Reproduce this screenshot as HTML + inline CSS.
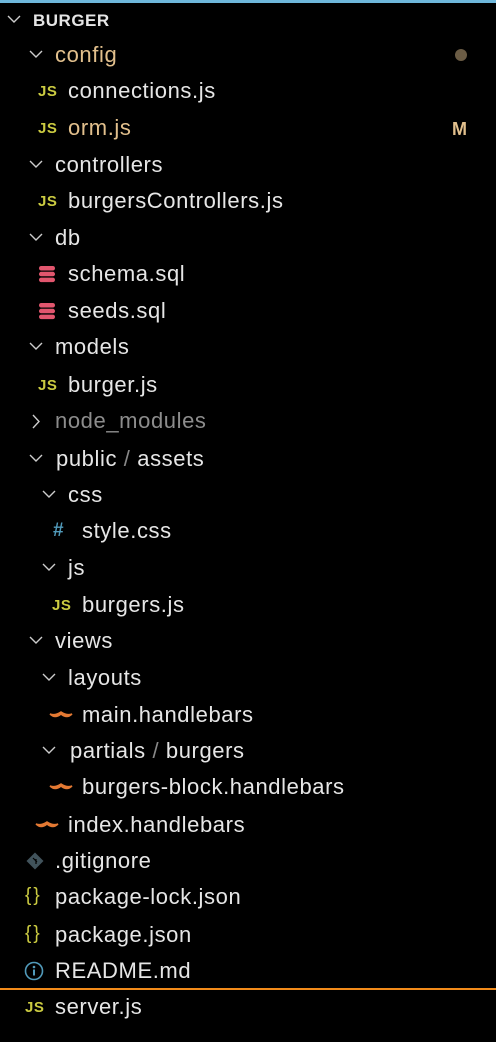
<!DOCTYPE html>
<html><head><meta charset="utf-8"><style>
html,body{margin:0;padding:0;background:#000;width:496px;height:1042px;overflow:hidden;position:relative;font-family:"Liberation Sans",sans-serif;}
.top{position:absolute;left:0;top:0;width:496px;height:3px;background:#6fb8dc;}
.r{position:absolute;left:0;width:496px;height:30px;}
.t{position:absolute;top:2px;font-size:22px;line-height:26px;color:#e6e6e6;white-space:nowrap;letter-spacing:0.6px;}
.ch{position:absolute;top:10px;}
.js{position:absolute;top:7px;font-size:15px;font-weight:bold;color:#cbcb41;letter-spacing:0.5px;}
.br{position:absolute;top:3px;font-size:19px;color:#cbcb41;letter-spacing:2px;}
.tan{color:#e2c08d;}
.sl{color:#888;}
.ic{position:absolute;}
</style></head><body>
<div class="top"></div>

<div class="r" style="top:5px"><svg class="ch" style="left:7px" width="14" height="9"><polyline points="1,1 7,7 13,1" fill="none" stroke="#ccc" stroke-width="1.4"/></svg><div class="t" style="left:33px;font-size:17px;font-weight:bold;top:3px;letter-spacing:0.5px">BURGER</div></div>

<div class="r" style="top:40px"><svg class="ch" style="left:29px" width="14" height="9"><polyline points="1,1 7,7 13,1" fill="none" stroke="#ccc" stroke-width="1.4"/></svg><div class="t tan" style="left:55px">config</div><svg class="ic" style="left:454px;top:8px" width="14" height="14"><circle cx="7" cy="7" r="6" fill="#6b5c45"/></svg></div>
<div class="r" style="top:76px"><span class="js" style="left:38px">JS</span><div class="t" style="left:68px">connections.js</div></div>
<div class="r" style="top:113px"><span class="js" style="left:38px">JS</span><div class="t tan" style="left:68px">orm.js</div><div class="t tan" style="left:452px;font-size:18px;font-weight:bold;top:3px;letter-spacing:0">M</div></div>
<div class="r" style="top:150px"><svg class="ch" style="left:29px" width="14" height="9"><polyline points="1,1 7,7 13,1" fill="none" stroke="#ccc" stroke-width="1.4"/></svg><div class="t" style="left:55px">controllers</div></div>
<div class="r" style="top:186px"><span class="js" style="left:38px">JS</span><div class="t" style="left:68px">burgersControllers.js</div></div>
<div class="r" style="top:223px"><svg class="ch" style="left:29px" width="14" height="9"><polyline points="1,1 7,7 13,1" fill="none" stroke="#ccc" stroke-width="1.4"/></svg><div class="t" style="left:55px">db</div></div>
<div class="r" style="top:259px"><svg class="ic" style="left:38px;top:6px" width="18" height="18"><rect x="1" y="1" width="16" height="4.5" rx="2.2" fill="#e2566e"/><rect x="1" y="6.8" width="16" height="4.5" rx="2.2" fill="#e2566e"/><rect x="1" y="12.6" width="16" height="4.5" rx="2.2" fill="#e2566e"/></svg><div class="t" style="left:68px">schema.sql</div></div>
<div class="r" style="top:296px"><svg class="ic" style="left:38px;top:6px" width="18" height="18"><rect x="1" y="1" width="16" height="4.5" rx="2.2" fill="#e2566e"/><rect x="1" y="6.8" width="16" height="4.5" rx="2.2" fill="#e2566e"/><rect x="1" y="12.6" width="16" height="4.5" rx="2.2" fill="#e2566e"/></svg><div class="t" style="left:68px">seeds.sql</div></div>
<div class="r" style="top:332px"><svg class="ch" style="left:29px" width="14" height="9"><polyline points="1,1 7,7 13,1" fill="none" stroke="#ccc" stroke-width="1.4"/></svg><div class="t" style="left:55px">models</div></div>
<div class="r" style="top:370px"><span class="js" style="left:38px">JS</span><div class="t" style="left:68px">burger.js</div></div>
<div class="r" style="top:406px"><svg class="ic" style="left:32px;top:8px" width="9" height="15"><polyline points="1,1 7,7.5 1,14" fill="none" stroke="#ccc" stroke-width="1.4"/></svg><div class="t" style="left:55px;color:#8c8c8c">node_modules</div></div>
<div class="r" style="top:444px"><svg class="ch" style="left:29px" width="14" height="9"><polyline points="1,1 7,7 13,1" fill="none" stroke="#ccc" stroke-width="1.4"/></svg><div class="t" style="left:56px">public <span class="sl">/</span> assets</div></div>
<div class="r" style="top:480px"><svg class="ch" style="left:42px" width="14" height="9"><polyline points="1,1 7,7 13,1" fill="none" stroke="#ccc" stroke-width="1.4"/></svg><div class="t" style="left:68px">css</div></div>
<div class="r" style="top:516px"><div class="t" style="left:53px;color:#519aba;font-weight:bold;font-size:19px">#</div><div class="t" style="left:82px">style.css</div></div>
<div class="r" style="top:553px"><svg class="ch" style="left:42px" width="14" height="9"><polyline points="1,1 7,7 13,1" fill="none" stroke="#ccc" stroke-width="1.4"/></svg><div class="t" style="left:68px">js</div></div>
<div class="r" style="top:590px"><span class="js" style="left:52px">JS</span><div class="t" style="left:82px">burgers.js</div></div>
<div class="r" style="top:626px"><svg class="ch" style="left:29px" width="14" height="9"><polyline points="1,1 7,7 13,1" fill="none" stroke="#ccc" stroke-width="1.4"/></svg><div class="t" style="left:55px">views</div></div>
<div class="r" style="top:663px"><svg class="ch" style="left:42px" width="14" height="9"><polyline points="1,1 7,7 13,1" fill="none" stroke="#ccc" stroke-width="1.4"/></svg><div class="t" style="left:68px">layouts</div></div>
<div class="r" style="top:700px"><svg class="ic" style="left:49px;top:10px" width="24" height="10"><path d="M1,4 Q6,9 12,4 Q18,9 23,4 Q18,6 12,2 Q6,6 1,4 Z" fill="#e37933" stroke="#e37933" stroke-width="1.5"/></svg><div class="t" style="left:82px">main.handlebars</div></div>
<div class="r" style="top:736px"><svg class="ch" style="left:42px" width="14" height="9"><polyline points="1,1 7,7 13,1" fill="none" stroke="#ccc" stroke-width="1.4"/></svg><div class="t" style="left:70px">partials <span class="sl">/</span> burgers</div></div>
<div class="r" style="top:772px"><svg class="ic" style="left:49px;top:10px" width="24" height="10"><path d="M1,4 Q6,9 12,4 Q18,9 23,4 Q18,6 12,2 Q6,6 1,4 Z" fill="#e37933" stroke="#e37933" stroke-width="1.5"/></svg><div class="t" style="left:82px">burgers-block.handlebars</div></div>
<div class="r" style="top:810px"><svg class="ic" style="left:35px;top:10px" width="24" height="10"><path d="M1,4 Q6,9 12,4 Q18,9 23,4 Q18,6 12,2 Q6,6 1,4 Z" fill="#e37933" stroke="#e37933" stroke-width="1.5"/></svg><div class="t" style="left:68px">index.handlebars</div></div>
<div class="r" style="top:846px"><svg class="ic" style="left:25px;top:5px" width="20" height="20"><rect x="4" y="4" width="12" height="12" transform="rotate(45 10 10)" fill="#41535b"/><path d="M8,7 L12,11 M11,8 L11,13" stroke="#000" stroke-width="1.2"/></svg><div class="t" style="left:55px">.gitignore</div></div>
<div class="r" style="top:882px"><span class="br" style="left:25px">{}</span><div class="t" style="left:55px">package-lock.json</div></div>
<div class="r" style="top:920px"><span class="br" style="left:25px">{}</span><div class="t" style="left:55px">package.json</div></div>
<div class="r" style="top:956px"><svg class="ic" style="left:24px;top:5px" width="20" height="20"><circle cx="10" cy="10" r="8.5" fill="none" stroke="#519aba" stroke-width="1.6"/><circle cx="10" cy="6" r="1.3" fill="#519aba"/><rect x="9" y="8.5" width="2" height="6" fill="#519aba"/></svg><div class="t" style="left:55px">README.md</div></div>
<div style="position:absolute;left:0;top:988px;width:496px;height:2px;background:#f28b1a"></div>
<div class="r" style="top:992px"><span class="js" style="left:25px">JS</span><div class="t" style="left:55px">server.js</div></div>
</body></html>
